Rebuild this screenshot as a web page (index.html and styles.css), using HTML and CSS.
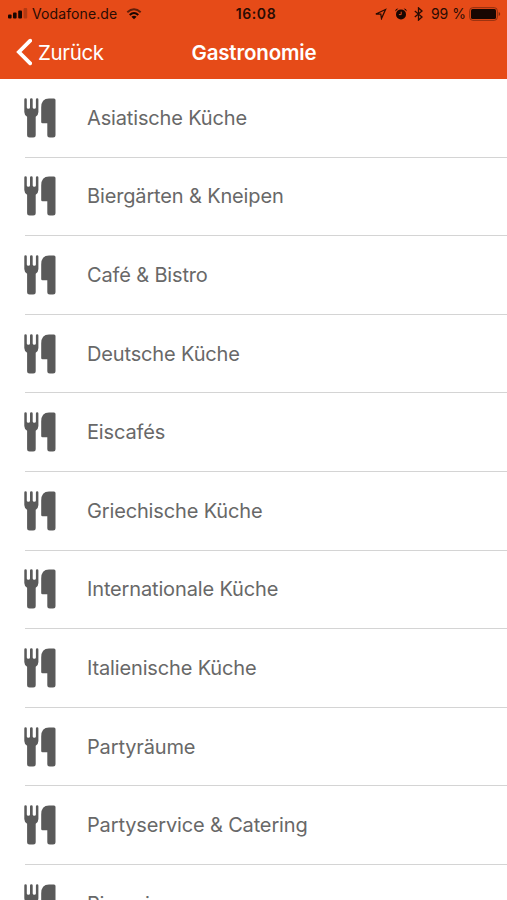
FILE: index.html
```html
<!DOCTYPE html>
<html lang="de">
<head>
	<title>Gastronomie</title>
	<meta charset="utf-8"/>
	<link rel="stylesheet" href="styles.css">
</head>
<body>

<svg class="hide">
	<symbol id="cutlery" viewBox="0 0 32 40">
		<path d="M.3 1.500a1.200 1.200 0 0 1 2.500 0V9.500q0 1.300 1.600 1.300T6 9.500V1.500a1.300 1.300 0 0 1 2.700 0V9.500q0 1.300 1.600 1.300T11.900 9.500V1.500a1.200 1.200 0 0 1 2.500 0V14q0 3-2.700 4.700V37q0 2.500-2.500 2.500H5.600q-2.500 0-2.500-2.500V18.700Q.3 17 .3 14z"/>
		<path d="M31.500 2V37q0 2.500-2.500 2.500h-3.200q-2.500 0-2.500-2.500V25.300h-4.800q-1.300 0-1.300-1.300V9.500Q17.200.4 25 .4h5q1.500 0 1.500 1.600z"/>
	</symbol>
</svg>

<div class="header">
	<div class="status">
		<div class="left">
			<svg class="signal" width="20" height="11" viewBox="0 0 20 11">
				<rect x="0" y="6.500" width="3.600" height="4" rx="1"/>
				<rect x="5" y="4.500" width="3.600" height="6" rx="1"/>
				<rect x="10.200" y="2.500" width="3.800" height="8" rx="1"/>
				<rect x="15.600" y="0" width="3.600" height="10.500" rx="1" opacity=".25"/>
			</svg>
			<span class="carrier">Vodafone.de</span>
			<svg width="16" height="12" viewBox="0 0 16 12">
				<path class="stroke" d="M1.300 4.300Q8-1.700 14.700 4.300" opacity=".65"/>
				<path class="stroke" d="M3.700 6.900Q8 3.100 12.300 6.900"/>
				<path d="M8 11.300 5.400 8.800Q8 6.900 10.600 8.800z"/>
			</svg>
		</div>
		<span class="time">16:08</span>
		<div class="right">
			<svg width="12" height="12" viewBox="0 0 12 12">
				<path class="thin" d="M.9 6 10.500 1.500 6.500 10.500 5.800 6.200z"/>
			</svg>
			<svg class="alarm" width="12" height="12" viewBox="0 0 12 12">
				<path d="M.3 3.500Q.2.500 3.400.4zM11.700 3.500Q11.800.5 8.600.4z"/>
				<circle cx="6" cy="6.400" r="5"/>
				<path class="hand" d="M6.200 3.700V6.600H3.900"/>
			</svg>
			<svg class="bluetooth" width="9" height="14" viewBox="0 0 9 14">
				<path class="thin" d="M.8 4 8 10 4.500 13.100V.9L8 4 .8 10"/>
			</svg>
			<span class="percent">99 %</span>
			<svg width="32" height="14" viewBox="0 0 32 14">
				<rect class="case" x=".7" y=".7" width="27.600" height="12.600" rx="3"/>
				<rect x="2" y="2" width="25" height="10" rx="1.500"/>
				<path d="M29.700 5q1.500.5 1.500 2t-1.500 2z" opacity=".5"/>
			</svg>
		</div>
	</div>
	<div class="nav">
		<div class="back">
			<svg width="17" height="28" viewBox="0 0 17 28">
				<path d="M15.200 2.700 3.900 14 15.200 25.300"/>
			</svg>
			<span>Zurück</span>
		</div>
		<h1>Gastronomie</h1>
	</div>
</div>
<ul class="list">
	<li><svg class="icon"><use href="#cutlery"/></svg><span>Asiatische Küche</span></li>
	<li><svg class="icon"><use href="#cutlery"/></svg><span>Biergärten &amp; Kneipen</span></li>
	<li><svg class="icon"><use href="#cutlery"/></svg><span>Café &amp; Bistro</span></li>
	<li><svg class="icon"><use href="#cutlery"/></svg><span>Deutsche Küche</span></li>
	<li><svg class="icon"><use href="#cutlery"/></svg><span>Eiscafés</span></li>
	<li><svg class="icon"><use href="#cutlery"/></svg><span>Griechische Küche</span></li>
	<li><svg class="icon"><use href="#cutlery"/></svg><span>Internationale Küche</span></li>
	<li><svg class="icon"><use href="#cutlery"/></svg><span>Italienische Küche</span></li>
	<li><svg class="icon"><use href="#cutlery"/></svg><span>Partyräume</span></li>
	<li><svg class="icon"><use href="#cutlery"/></svg><span>Partyservice &amp; Catering</span></li>
	<li><svg class="icon"><use href="#cutlery"/></svg><span>Pizzeria</span></li>
</ul>

</body>
</html>
```
FILE: styles.css
```css
* {
	margin: 0px;
	padding: 0px;
	box-sizing: border-box;
}

body {
	height: 900px;
	overflow: hidden;
	background-color: white;
	font-family: Inter, "Liberation Sans", sans-serif;
	white-space: nowrap;
}
.hide {
	display: none;
}

.header {
	height: 79px;
	background-color: #e64b18;
}
.status {
	display: grid;
	grid-template-columns: 1fr auto 1fr;
	align-items: center;
	height: 27px;
	padding: 0px 6px 0px 8px;
	font-size: 14px;
	color: #2a0c03;
	fill: #180602;
}
	.left, .right {
		display: flex;
		align-items: center;
	}
	.right {
		justify-content: flex-end;
	}
	.signal {
		margin-right: 4px;
	}
	.carrier {
		margin-right: 9px;
		letter-spacing: 0.1px;
	}
	.time {
		padding-left: 3px;
		font-weight: 600;
		letter-spacing: 0.6px;
	}
	.stroke {
		fill: none;
		stroke: #180602;
		stroke-width: 2;
	}
	.thin {
		fill: none;
		stroke: #2a0c03;
		stroke-width: 1.3;
	}
	.alarm {
		margin: 0px 7px 0px 8px;
	}
	.hand {
		fill: none;
		stroke: #e64b18;
	}
	.percent {
		margin: 0px 3px 0px 8px;
	}
	.case {
		fill: none;
		stroke: #8a2d0f;
	}
.nav {
	display: grid;
	grid-template-columns: 1fr auto 1fr;
	align-items: center;
	height: 50px;
	padding: 0px 14px 0px 15px;
	color: white;
}
	.back {
		display: flex;
		align-items: center;
		font-size: 20.5px;
		letter-spacing: -0.35px;
	}
	.back svg {
		margin-right: 6px;
		fill: none;
		stroke: white;
		stroke-width: 3.8;
		stroke-linecap: round;
	}
	.nav h1 {
		font-size: 20.5px;
		font-weight: 600;
		letter-spacing: -0.15px;
	}

.list {
	list-style: none;
}
	.list li {
		display: flex;
		align-items: center;
		height: 78.6px;
		margin-left: 25px;
		border-bottom: 1px solid #d4d4d4;
		font-size: 20px;
		letter-spacing: -0.15px;
		color: #686868;
	}
	.icon {
		flex: none;
		width: 32px;
		height: 40px;
		margin: 0px 31px 0px -1px;
		fill: #5a5a5a;
	}
```
